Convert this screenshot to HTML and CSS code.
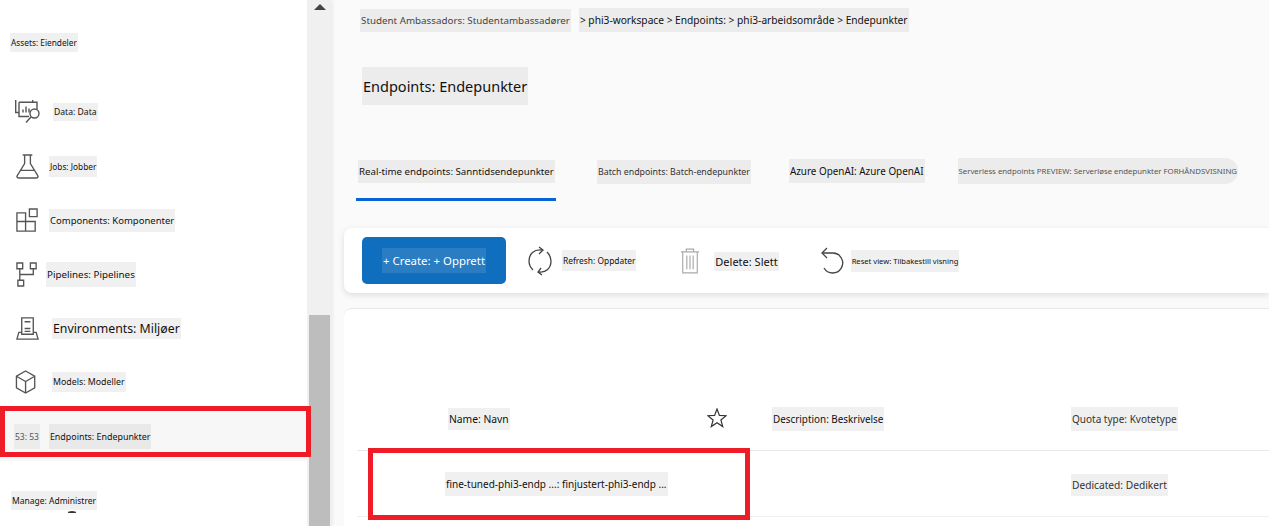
FILE: index.html
```html
<!DOCTYPE html>
<html lang="nb">
<head>
    <meta charset="UTF-8">
    <title>Endpoints</title>
    <link rel="stylesheet" href="styles.css">
</head>
<body>
    <div class="page">
        <!-- Sidebar -->
        <aside class="sidebar">
            <div class="section-title"><span class="chip assets-label">Assets: Eiendeler</span></div>
            <nav class="nav">
                <div class="nav-item">
                    <svg class="icon" viewBox="0 1.500 25 25"><path d="M4 14H.7V.7h17v3M4 3.700h18v7M4 3.700V18h10"/><path d="M8 14v-3M11 14V8M14 14v-4"/><circle cx="19.500" cy="15" r="4.500"/><path d="M16 18.500L11 24"/></svg>
                    <span class="chip data-label">Data: Data</span>
                </div>
                <div class="nav-item">
                    <svg class="icon" viewBox="0 0 26 26"><path d="M8 1h10M10 1v9L2 23c0 1 .5 2 2 2h18c1.500 0 2-1 2-2L16 10V1M6 17h14"/></svg>
                    <span class="chip jobs-label">Jobs: Jobber</span>
                </div>
                <div class="nav-item">
                    <svg class="icon" viewBox="0 0 26 26"><path d="M2 5h9v9h10v10H2zM2 14h9v10"/><path d="M15 1h8v8h-8z"/></svg>
                    <span class="chip comp-label">Components: Komponenter</span>
                </div>
                <div class="nav-item pipelines">
                    <svg class="icon" viewBox="0 0 26 26"><path d="M2 1h6v6H2zM16 1h6v6h-6zM3 19h6v6H3zM5 7v12M19 7v6H5"/></svg>
                    <span class="chip pipe-label">Pipelines: Pipelines</span>
                </div>
                <div class="nav-item">
                    <svg class="icon" viewBox="0 0 26 26"><path d="M7 2h12v17H7zM10 6h6M10 13h6M10 16h6M7 17H4l-2 7h22l-2-7h-3"/></svg>
                    <span class="chip env-label">Environments: Miljøer</span>
                </div>
                <div class="nav-item">
                    <svg class="icon" viewBox="0 0 26 26"><path d="M11 1l9.500 5.500v12L11 24l-9.500-5.500v-12zM1.500 6.500L11 12l9.500-5.500M11 12v12"/></svg>
                    <span class="chip model-label">Models: Modeller</span>
                </div>
                <div class="nav-item active">
                    <span class="chip count">53: 53</span>
                    <span class="chip endpoint-label">Endpoints: Endepunkter</span>
                </div>
            </nav>
            <div class="section-title manage"><span class="chip manage-label">Manage: Administrer</span></div>
            <div class="clipped-icon"></div>
        </aside>

        <div class="scrollbar">
            <div class="arrow"></div>
            <div class="thumb"></div>
        </div>

        <!-- Innhold -->
        <main class="main">
            <div class="crumbs">
                <span class="chip chip-dark crumb-first">Student Ambassadors: Studentambassadører</span>
                <span class="chip chip-dark crumb-path">&gt; phi3-workspace &gt; Endpoints: &gt; phi3-arbeidsområde &gt; Endepunkter</span>
            </div>
            <h1 class="title"><span class="chip chip-dark">Endpoints: Endepunkter</span></h1>

            <div class="tabs">
                <div class="tab selected"><span class="chip chip-dark realtime-label">Real-time endpoints: Sanntidsendepunkter</span></div>
                <div class="tab batch"><span class="chip chip-dark batch-label">Batch endpoints: Batch-endepunkter</span></div>
                <div class="tab azure"><span class="chip chip-dark azure-label">Azure OpenAI: Azure OpenAI</span></div>
                <div class="tab serverless"><span class="chip chip-dark preview">Serverless endpoints PREVIEW: Serverløse endepunkter FORHÅNDSVISNING</span></div>
            </div>

            <div class="toolbar">
                <button class="create"><span class="create-label">+ Create: + Opprett</span></button>
                <div class="tool refresh">
                    <svg class="tool-icon" viewBox="0 0 26 30"><path d="M15 4C7 3 2 8 2 15c0 4 2 7 4 9M12 26c7 1 12-4 12-11 0-4-2-7-4-9"/><path d="M12 1l4 3-4 4M14 22l-3 4 4 3"/></svg>
                    <span class="chip refresh-label">Refresh: Oppdater</span>
                </div>
                <div class="tool delete">
                    <svg class="tool-icon gray" viewBox="0 0 22 28"><path d="M1 4h20M7 4V1h8v3M3 4v23h16V4M7.500 8v15M11 8v15M14.500 8v15"/></svg>
                    <span class="chip delete-label">Delete: Slett</span>
                </div>
                <div class="tool reset">
                    <svg class="tool-icon" viewBox="2 0 26 30"><path d="M3 7h11a10 10 0 1 1-9 15"/><path d="M8 2L3 7l5 5"/></svg>
                    <span class="chip reset-label">Reset view: Tilbakestill visning</span>
                </div>
            </div>

            <section class="table-card">
                <div class="table-row table-head">
                    <span><span class="chip name-head">Name: Navn</span></span>
                    <svg class="star" viewBox="0 0 20 20"><path d="M10 1l2.400 6.400 6.800.3-5.300 4.300 1.800 6.600L10 14.800l-5.700 3.800 1.800-6.600L.8 7.700l6.800-.3z"/></svg>
                    <span><span class="chip desc-head">Description: Beskrivelse</span></span>
                    <span><span class="chip quota-head">Quota type: Kvotetype</span></span>
                </div>
                <div class="table-row table-body">
                    <span><span class="chip name-cell">fine-tuned-phi3-endp ...: finjustert-phi3-endp ...</span></span>
                    <span></span>
                    <span></span>
                    <span><span class="chip quota-cell">Dedicated: Dedikert</span></span>
                </div>
            </section>
        </main>
    </div>
</body>
</html>
```

FILE: styles.css
```css
/* Side */
*, *::after {
    box-sizing: border-box;
}

body {
    margin: 0;
    font-family: "Noto Sans", "Open Sans", sans-serif;
    color: #111;
    background-color: #fafafa;
    overflow: hidden;
}

.page {
    display: flex;
    width: 1269px;
    height: 526px;
    overflow: hidden;
}

/* Tekstbrikker */
.chip {
    display: inline-block;
    background-color: #f0f0f0;
    white-space: nowrap;
    padding: 4px 1px;
}

.chip-dark {
    background-color: #ececec;
}

/* Sidemeny */
.sidebar {
    width: 307px;
    flex-shrink: 0;
    background-color: #fff;
    padding-top: 32px;
    position: relative;
    z-index: 1;
}

.section-title {
    padding-left: 10px;
    height: 20px;
    display: flex;
    align-items: center;
}

.nav {
    margin-top: 33px;
}

.nav-item {
    display: flex;
    align-items: center;
    gap: 9px;
    height: 54px;
    padding-left: 15px;
}

.icon {
    width: 25px;
    height: 25px;
    flex-shrink: 0;
    fill: none;
    stroke: #555;
    stroke-width: 1.400;
}

.assets-label { font-size: 8.300px; padding: 4px 1px; }
.data-label { font-size: 8.600px; padding: 3px 1px; margin-left: 4px; }
.jobs-label { font-size: 8.300px; padding: 5px 1px; }
.comp-label { font-size: 9.500px; padding: 5px 1px; }
.pipe-label { font-size: 9.800px; padding: 6px 1px; }
.env-label { font-size: 12.300px; padding: 2px 1px; margin-left: 3px; }
.model-label { font-size: 8.800px; padding: 4px 1px; margin-left: 3px; }
.endpoint-label { font-size: 8.900px; padding: 6px 1px; background-color: #e9e9e9; }
.manage-label { font-size: 8.500px; padding: 4px 1px; }

.pipelines {
    gap: 6px;
}

.active {
    background-color: #f7f7f7;
    position: relative;
    height: 55px;
    margin-top: -3px;
    padding-top: 5px;
}

.active::after {
    content: "";
    position: absolute;
    left: 0;
    top: 0;
    width: 311px;
    height: 51px;
    border: 5px solid #ee1c27;
}

.count {
    font-size: 8.500px;
    padding: 7px 1px;
    margin-left: -1px;
    color: #555;
    background-color: #ececec;
}

.manage {
    margin-top: 29px;
    padding-left: 11px;
}

.clipped-icon {
    width: 8px;
    height: 3px;
    margin: 1px 0 0 68px;
    border-top: 2px solid #333;
    border-radius: 50% 50% 0 0;
}

/* Rullefelt */
.scrollbar {
    width: 24px;
    flex-shrink: 0;
    background-color: #f0f0f0;
    padding-left: 2px;
    box-shadow: 2px 0 3px rgba(0, 0, 0, 0.06);
}

.arrow {
    width: 0;
    height: 0;
    margin: 4px 0 0 5px;
    border-left: 6px solid transparent;
    border-right: 6px solid transparent;
    border-bottom: 6px solid #444;
}

.thumb {
    width: 21px;
    height: 212px;
    margin-top: 305px;
    background-color: #bdbdbd;
}

/* Hovedinnhold */
.main {
    flex: 1;
    min-width: 0;
    padding: 7px 0 0 13px;
}

.crumbs {
    display: flex;
    align-items: center;
    gap: 8px;
    height: 26px;
    padding-left: 16px;
}

.crumb-first { font-size: 9.800px; padding: 5px 1px; color: #444; }
.crumb-path { font-size: 10.200px; padding: 5px 1px; }

.title {
    margin: 34px 0 0 18px;
    height: 38px;
    font-size: 14.500px;
    font-weight: 400;
    line-height: 20px;
}

.title .chip {
    padding: 9px 1px;
}

.tabs {
    display: flex;
    align-items: flex-start;
    height: 70px;
    margin-top: 53px;
}

.tab {
    height: 43px;
}

.selected {
    width: 200px;
    margin-left: 12px;
    padding-left: 2px;
    border-bottom: 3px solid #0a63d6;
}

.batch {
    margin-left: 41px;
}

.azure {
    margin-left: 38px;
}

.serverless {
    margin-left: 33px;
    margin-top: -1px;
}

.realtime-label { font-size: 9.700px; padding: 5px 1px; }
.batch-label { font-size: 8.800px; padding: 6px 1px; color: #333; }
.azure-label { font-size: 9.900px; padding: 5px 1px; }

.preview {
    font-size: 7.800px;
    padding: 8px 1px;
    color: #555;
    border-radius: 0 13px 13px 0;
}

.toolbar {
    display: flex;
    align-items: center;
    height: 65px;
    padding-left: 18px;
    background-color: #fff;
    border-radius: 8px 0 0 8px;
    box-shadow: 0 2px 6px rgba(0, 0, 0, 0.12);
}

.create {
    width: 144px;
    height: 47px;
    border: none;
    border-radius: 5px;
    background-color: #106ebe;
    font-family: inherit;
    padding: 0;
}

.create-label {
    display: inline-block;
    padding: 5px 1px;
    font-size: 11.400px;
    color: #fff;
    background-color: #2a7cc3;
}

.tool {
    display: flex;
    align-items: center;
}

.tool-icon {
    fill: none;
    stroke: #444;
    stroke-width: 1.300;
    width: 26px;
    height: 30px;
}

.gray {
    stroke: #aaa;
    width: 20px;
    height: 26px;
}

.refresh {
    margin-left: 21px;
    gap: 9px;
}

.delete {
    margin-left: 44px;
    gap: 14px;
}

.reset {
    margin-left: 42px;
    gap: 4px;
}

.refresh-label { font-size: 8.400px; padding: 5px 1px; }
.delete-label { font-size: 11px; padding: 2px 1px; margin-top: 2px; }
.reset-label { font-size: 7.600px; padding: 6px 1px; }

.table-card {
    height: 240px;
    margin-top: 15px;
    background-color: #fff;
    border-radius: 8px 0 0 0;
    border-top: 1px solid #e8e8e8;
    padding-top: 77px;
}

.table-row {
    display: grid;
    grid-template-columns: 259px 65px 299px 1fr;
    align-items: center;
    margin-left: 13px;
    padding-left: 91px;
    border-bottom: 1px solid #e8e8e8;
}

.table-head {
    height: 65px;
}

.table-body {
    height: 66px;
    border-color: #f0f0f0;
    position: relative;
}

.table-body::after {
    content: "";
    position: absolute;
    left: 11px;
    top: -3px;
    width: 382px;
    height: 72px;
    border: 5px solid #ee1c27;
}

.name-head { font-size: 10.300px; padding: 4px 1px; }
.desc-head { font-size: 9.900px; padding: 5px 1px; }
.quota-head { font-size: 10px; padding: 5px 1px; color: #333; }
.name-cell { font-size: 10px; padding: 5px 1px; margin-left: -3px; }
.quota-cell { font-size: 10.200px; padding: 4px 1px; color: #333; }

.star {
    width: 20px;
    height: 20px;
    fill: #fff;
    stroke: #333;
    stroke-width: 1.200;
}
```
